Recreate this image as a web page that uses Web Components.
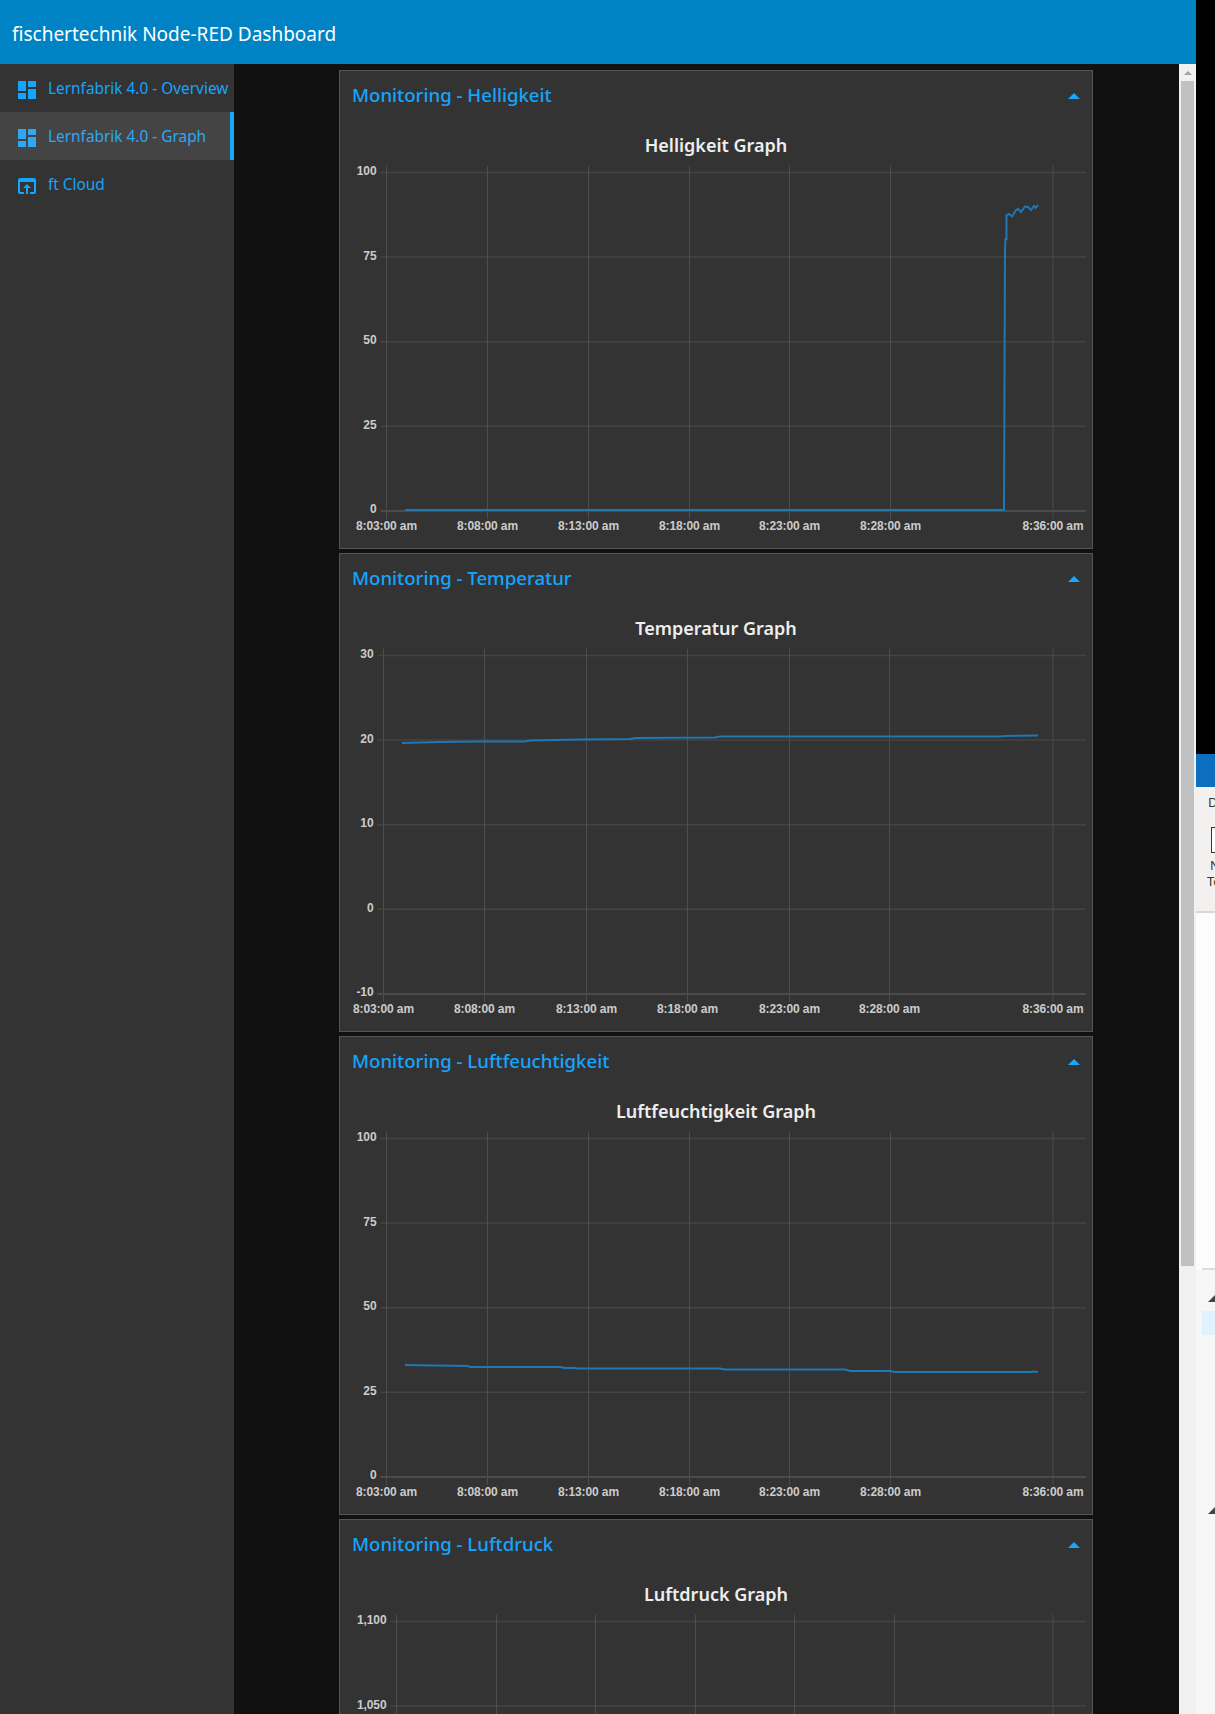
<!DOCTYPE html>
<html>
<head>
<meta charset="utf-8">
<title>fischertechnik Node-RED Dashboard</title>
<style>
  html, body { margin: 0; height: 1714px; overflow: hidden; background: #000; }
  body { font-family: "Noto Sans", sans-serif; }
  ft-card + ft-card { margin-top: 4px; }
</style>
</head>
<body>
<ft-dashboard>
  <ft-toolbar slot="toolbar">fischertechnik Node-RED Dashboard</ft-toolbar>
  <ft-nav slot="nav">
    <ft-nav-item icon="dashboard">Lernfabrik 4.0 - Overview</ft-nav-item>
    <ft-nav-item icon="dashboard" active>Lernfabrik 4.0 - Graph</ft-nav-item>
    <ft-nav-item icon="cloud">ft Cloud</ft-nav-item>
  </ft-nav>
  <ft-card heading="Monitoring - Helligkeit">
    <ft-chart heading="Helligkeit Graph" left="386.5" xs="386.5,487.5,588.5,689.5,789.5,890.5,1053"
      ticks="100;75;50;25;0"
      points="405,510 1004,510 1005,250 1005.5,239 1006.5,239 1006.5,215 1009,214 1012,216.5 1016,210 1018,209 1021,212 1025,206.5 1028,207 1031,210 1034,206 1035.5,208 1038,205"></ft-chart>
  </ft-card>
  <ft-card heading="Monitoring - Temperatur">
    <ft-chart heading="Temperatur Graph" left="383.5" xs="383.5,484.5,586.5,687.5,789.5,889.5,1053"
      ticks="30;20;10;0;-10"
      points="402,260 440,259 480,258.5 525,258.5 530,257.5 580,256.5 630,256 635,255 715,254.5 720,253.5 1000,253.5 1005,253 1038,252.5"></ft-chart>
  </ft-card>
  <ft-card heading="Monitoring - Luftfeuchtigkeit">
    <ft-chart heading="Luftfeuchtigkeit Graph" left="386.5" xs="386.5,487.5,588.5,689.5,789.5,890.5,1053"
      ticks="100;75;50;25;0"
      points="405,399 435,399.5 468,400 470,401 560,401 565,402 575,402 578,402.5 720,402.5 725,403.5 845,403.5 850,405 890,405 895,406 1030,406 1034,405.5 1038,406"></ft-chart>
  </ft-card>
  <ft-card heading="Monitoring - Luftdruck">
    <!-- only the first two rows of this chart are on screen -->
    <ft-chart heading="Luftdruck Graph" left="396.5" xs="396.5,496.5,595.5,695.5,794.5,894.5,1053"
      ticks="1,100;1,050" cut></ft-chart>
  </ft-card>
  <ft-scrollbar slot="scrollbar"></ft-scrollbar>
  <ft-peek slot="peek"></ft-peek>
</ft-dashboard>

<script>
class FtDashboard extends HTMLElement {
  constructor() {
    super();
    this.attachShadow({ mode: 'open' }).innerHTML = `
      <style>
        :host { display: flex; width: 1215px; height: 1714px; background: #000; }
        .app { width: 1196px; display: flex; flex-direction: column; }
        .body { flex: 1; display: flex; min-height: 0; }
        main { flex: 1; background: #111; padding: 6px 86px 0 105px; overflow: hidden; }
      </style>
      <div class="app">
        <slot name="toolbar"></slot>
        <div class="body">
          <slot name="nav"></slot>
          <main><slot></slot></main>
          <slot name="scrollbar"></slot>
        </div>
      </div>
      <slot name="peek"></slot>`;
  }
}

class FtToolbar extends HTMLElement {
  constructor() {
    super();
    this.attachShadow({ mode: 'open' }).innerHTML = `
      <style>
        :host { display: flex; align-items: center; box-sizing: border-box; height: 64px; padding: 4px 0 0 12px; background: #0083c4; color: #fff; font: 400 19px "Noto Sans", sans-serif; }
      </style>
      <slot></slot>`;
  }
}

class FtNav extends HTMLElement {
  constructor() {
    super();
    this.attachShadow({ mode: 'open' }).innerHTML = `
      <style>
        :host { display: block; width: 234px; background: #333; }
      </style>
      <slot></slot>`;
  }
}

const navIcons = {
  dashboard: '<path d="M3 13h8V3H3v10zm0 8h8v-6H3v6zm10 0h8V11h-8v10zm0-18v6h8V3h-8z"/>',
  cloud: '<path d="M19 4H5c-1.11 0-2 .9-2 2v12c0 1.1.89 2 2 2h4v-2H5V8h14v10h-4v2h4c1.1 0 2-.9 2-2V6c0-1.1-.89-2-2-2zm-7 6l-4 4h3v6h2v-6h3l-4-4z"/>'
};

class FtNavItem extends HTMLElement {
  constructor() {
    super();
    const icon = navIcons[this.getAttribute('icon')];
    this.attachShadow({ mode: 'open' }).innerHTML = `
      <style>
        :host { display: flex; align-items: center; box-sizing: border-box; height: 48px; padding-left: 18px; color: #14a5ff; font: 400 15.4px "Noto Sans", sans-serif; white-space: nowrap; overflow: hidden; }
        :host([active]) { background: #444; border-right: 4px solid #14a9ff; color: #2ea8f5; }
        svg { width: 18px; height: 18px; flex: none; margin: 4px 12px 0 0; fill: currentColor; }
      </style>
      <svg viewBox="3 3 18 18">${icon}</svg><slot></slot>`;
  }
}

class FtCard extends HTMLElement {
  constructor() {
    super();
    this.attachShadow({ mode: 'open' }).innerHTML = `
      <style>
        :host { display: block; box-sizing: border-box; width: 754px; height: 479px; background: #333; border: 1px solid #555; }
        header { display: flex; align-items: center; justify-content: space-between; box-sizing: border-box; height: 48px; padding: 0 12px 2px; color: #14a5ff; font: 500 18.6px "Noto Sans", sans-serif; }
        i { width: 0; height: 0; margin-top: 4px; border: 6px solid transparent; border-top: 0; border-bottom: 6px solid #14a9ff; }
      </style>
      <header><span></span><i></i></header>
      <slot></slot>`;
    this.shadowRoot.querySelector('span').textContent = this.getAttribute('heading');
  }
}

// x in the attributes is page x, y is page y as it would be in the first card
class FtChart extends HTMLElement {
  constructor() {
    super();
    this.attachShadow({ mode: 'open' });
    const xs = this.getAttribute('xs').split(',').map(Number);
    const ticks = this.getAttribute('ticks').split(';');
    const left = Number(this.getAttribute('left'));
    const cut = this.hasAttribute('cut');
    const times = ['8:03:00 am', '8:08:00 am', '8:13:00 am', '8:18:00 am', '8:23:00 am', '8:28:00 am', '8:36:00 am'];
    // svg starts at page x 340 and 155 px down
    const ox = 340, oy = 155;
    const hy = i => 172.5 + i * 84.6 - oy;
    let grid = '';
    ticks.forEach((t, i) => {
      const y = hy(i);
      const axis = !cut && i === ticks.length - 1;
      grid += `<line x1="${left - ox - 6}" x2="${1086 - ox}" y1="${y}" y2="${y}" stroke="${axis ? '#555' : '#444'}" stroke-width="1.5"/>`;
      grid += `<text x="${left - ox - 10}" y="${y + 2.5}" text-anchor="end">${t}</text>`;
    });
    xs.forEach((x, i) => {
      grid += `<line x1="${x - ox}" x2="${x - ox}" y1="${hy(0) - 7}" y2="${hy(4) + 8}" stroke="#4d4d4d"/>`;
      if (!cut) grid += `<text x="${x - ox}" y="${hy(4) + 19.5}" text-anchor="middle">${times[i]}</text>`;
    });
    let line = '';
    const pts = this.getAttribute('points');
    if (pts) {
      const local = pts.trim().split(/\s+/).map(p => {
        const [x, y] = p.split(',').map(Number);
        return `${x - ox},${y - oy}`;
      }).join(' ');
      line = `<polyline points="${local}" fill="none" stroke="#1f77b4" stroke-width="2"/>`;
    }
    this.shadowRoot.innerHTML = `
      <style>
        :host { display: block; }
        h3 { margin: 16px 0 0; height: 20px; text-align: center; color: #eee; font: 600 18px/20px "Noto Sans", sans-serif; }
        svg { display: block; width: 752px; height: 393px; }
        text { fill: #ccc; font: 700 12px "Liberation Sans", Arial, sans-serif; letter-spacing: -0.1px; }
      </style>
      <h3></h3>
      <svg viewBox="0 0 752 393">${grid}${line}</svg>`;
    this.shadowRoot.querySelector('h3').textContent = this.getAttribute('heading');
  }
}

class FtScrollbar extends HTMLElement {
  constructor() {
    super();
    this.attachShadow({ mode: 'open' }).innerHTML = `
      <style>
        :host { display: block; box-sizing: border-box; width: 17px; padding: 0 2px; background: #f1f1f1; }
        .up { height: 17px; display: flex; align-items: center; justify-content: center; }
        .up i { width: 0; height: 0; border: 4px solid transparent; border-top: 0; border-bottom: 4px solid #a3a3a3; }
        .thumb { height: 1185px; background: #c1c1c1; }
      </style>
      <div class="up"><i></i></div>
      <div class="thumb"></div>`;
  }
}

// the edge of another window that shows beside the browser
class FtPeek extends HTMLElement {
  constructor() {
    super();
    this.attachShadow({ mode: 'open' }).innerHTML = `
      <style>
        :host { display: block; width: 19px; height: 1714px; overflow: hidden; background: #f6f6f6; color: #333; font: 13px/16px "Noto Sans", sans-serif; }
        .black { height: 754px; background: #000; }
        .title { height: 33px; background: #0c6fc0; }
        .ribbon { box-sizing: border-box; height: 126px; background: #f2f1f0; border-bottom: 2px solid #d8d8d8; padding-top: 7px; }
        .ribbon span { display: block; white-space: nowrap; }
        .tab { padding-left: 12px; }
        .box { box-sizing: border-box; width: 8px; height: 26px; margin: 17px 0 0 15px; border: 1px solid #333; border-right: 0; background: #fff; box-shadow: inset 0 2px 0 #f2f1f0; }
        .n { padding-left: 14px; margin-top: 4px; }
        .t { padding-left: 11px; }
        .top { height: 357px; background: #fcfcfc; position: relative; }
        .rule { position: absolute; left: 6px; right: 0; bottom: 0; height: 2px; background: #ddd; }
        .tri { width: 0; height: 0; margin-left: 12px; border-bottom: 7px solid #444; border-left: 7px solid transparent; }
        .sel { height: 24px; margin: 9px 0 0 6px; background: #dff2fd; }
      </style>
      <div class="black"></div>
      <div class="title"></div>
      <div class="ribbon">
        <span class="tab">D</span>
        <div class="box"></div>
        <span class="n">N</span>
        <span class="t">Te</span>
      </div>
      <div class="top"><div class="rule"></div></div>
      <div class="tri" style="margin-top:25px"></div>
      <div class="sel"></div>
      <div class="tri" style="margin-top:172px"></div>`;
  }
}

customElements.define('ft-dashboard', FtDashboard);
customElements.define('ft-toolbar', FtToolbar);
customElements.define('ft-nav', FtNav);
customElements.define('ft-nav-item', FtNavItem);
customElements.define('ft-card', FtCard);
customElements.define('ft-chart', FtChart);
customElements.define('ft-scrollbar', FtScrollbar);
customElements.define('ft-peek', FtPeek);
</script>
</body>
</html>
